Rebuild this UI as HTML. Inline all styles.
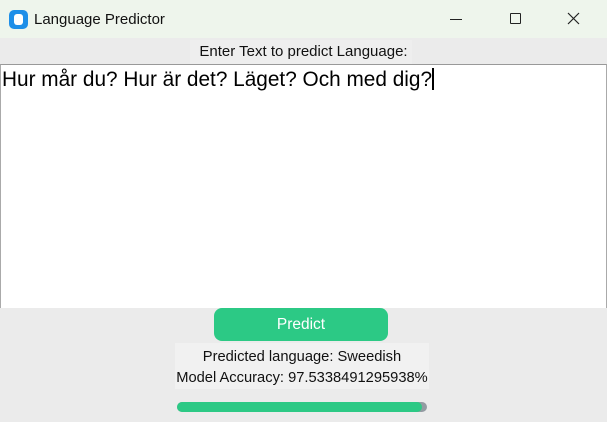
<!DOCTYPE html>
<html><head><style>
body{margin:0;width:607px;height:422px;overflow:hidden;background:#ebebeb;font-family:"Liberation Sans",sans-serif;position:relative}
div{position:absolute;box-sizing:border-box}
</style></head><body>
<div style="left:0;top:0;width:607px;height:38px;background:#eef5ec"></div>
<div style="left:9px;top:10px;width:19px;height:19px;border-radius:5px;background:#1e8fe8"></div>
<div style="left:14px;top:14px;width:9px;height:11px;border-radius:3px;background:#fff"></div>
<div style="left:34px;top:11px;font-size:15px;color:#111">Language Predictor</div>
<div style="left:450px;top:19px;width:12px;height:1px;background:#222"></div>
<div style="left:510px;top:13px;width:11px;height:11px;border:1.3px solid #222;border-radius:1px"></div>
<svg style="position:absolute;left:567px;top:12px" width="13" height="13"><path d="M1 1L12 12M12 1L1 12" stroke="#222" stroke-width="1.2"/></svg>
<div style="left:190px;top:40px;width:222px;height:24px;background:#eeeeee"></div>
<div style="left:0;top:43px;width:607px;text-align:center;font-size:15px;color:#111">Enter Text to predict Language:</div>
<div style="left:0;top:64px;width:607px;height:244px;background:#fff;border-top:1px solid #999;border-left:1px solid #aaa;border-right:1px solid #aaa"></div>
<div style="left:2px;top:68px;font-size:20.8px;color:#000;white-space:nowrap">Hur mår du? Hur är det? Läget? Och med dig?<span style="display:inline-block;width:2px;height:22px;background:#000;vertical-align:-4px"></span></div>
<div style="left:214px;top:308px;width:174px;height:33px;border-radius:8px;background:#2cc985;color:#fff;font-size:15.5px;text-align:center;line-height:33px">Predict</div>
<div style="left:175px;top:343px;width:254px;height:46px;background:#f1f1f1"></div>
<div style="left:175px;top:347px;width:254px;text-align:center;font-size:14.7px;line-height:21px;color:#111">Predicted language: Sweedish<br>Model Accuracy: 97.5338491295938%</div>
<div style="left:177px;top:402px;width:250px;height:10px;border-radius:5px;background:#939ba2"></div>
<div style="left:177px;top:402px;width:245px;height:10px;border-radius:5px;background:#2cc985"></div>
</body></html>
